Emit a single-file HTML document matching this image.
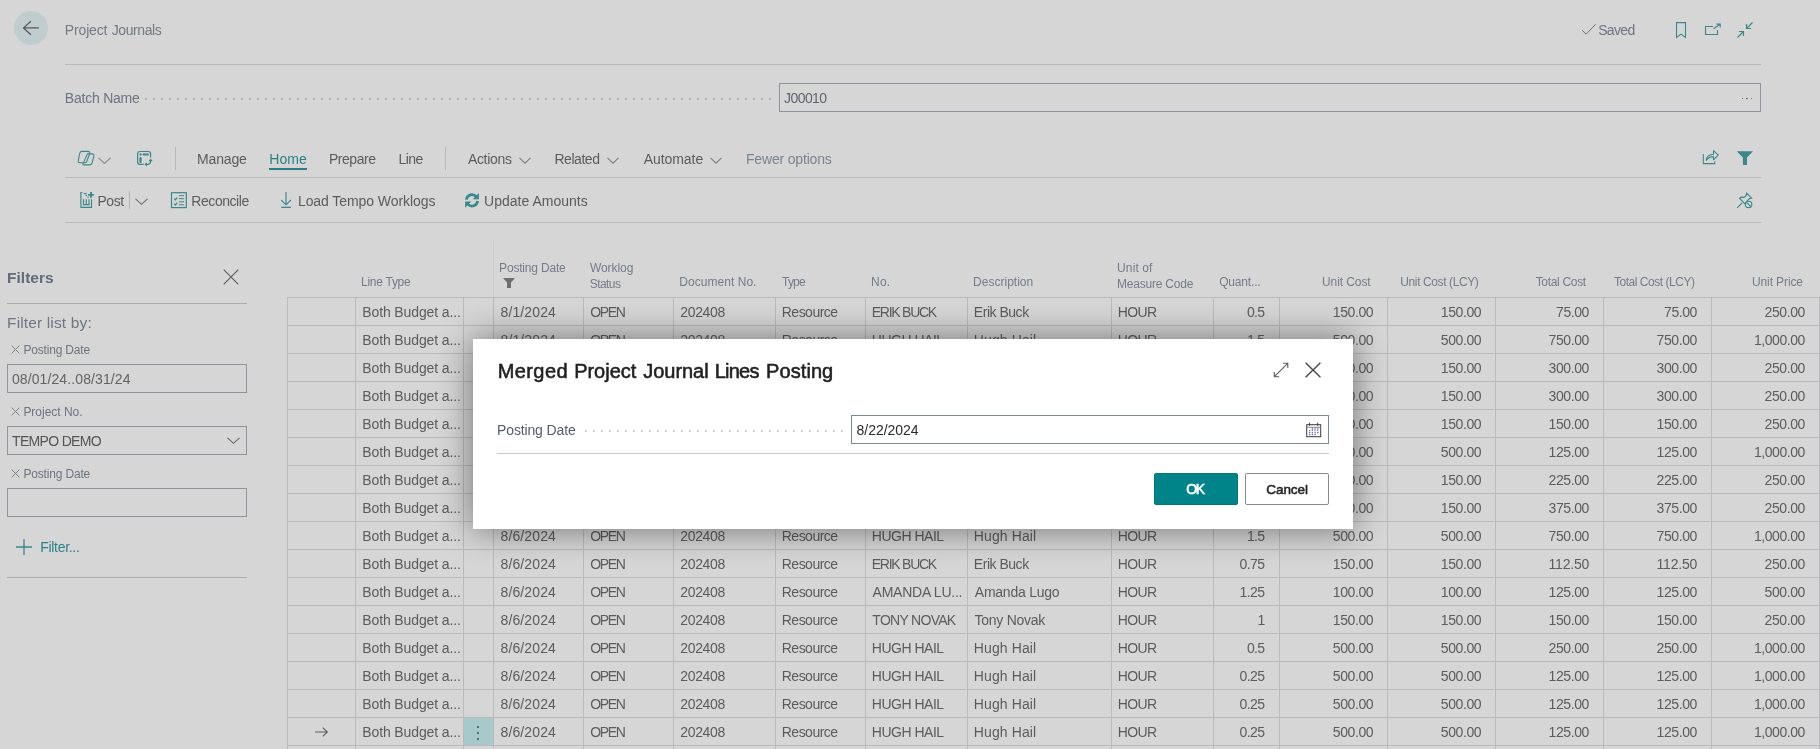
<!DOCTYPE html>
<html lang="en"><head><meta charset="utf-8"><title>Project Journals</title>
<style>
html,body{margin:0;padding:0;}
body{width:1820px;height:749px;overflow:hidden;position:relative;background:#d6d6d6;font-family:"Liberation Sans",sans-serif;}
.t{position:absolute;white-space:pre;}
#page,#dlg{position:absolute;left:0;top:0;width:1820px;height:749px;overflow:hidden;will-change:transform;}
.f0{font-size:14px;line-height:20px;color:#727a86;}
.f1{font-size:14px;line-height:20px;color:#6d7684;}
.f2{font-size:14px;line-height:20px;color:#6b7480;}
.f3{font-size:14px;line-height:20px;color:#5f6470;}
.f4{font-size:14px;line-height:20px;color:#5c5c5c;}
.f5{font-size:14px;line-height:20px;color:#2a8287;}
.f6{font-size:14px;line-height:20px;color:#7b8491;}
.f7{font-size:15.5px;line-height:21px;color:#626a78;font-weight:700;}
.f8{font-size:15.5px;line-height:21px;color:#6e7683;}
.f9{font-size:12px;line-height:18px;color:#6c7582;}
.f10{font-size:14px;line-height:20px;color:#636363;}
.f11{font-size:14px;line-height:20px;color:#555;}
.f12{font-size:12px;line-height:18px;color:#747c88;}
.f13{font-size:20px;line-height:26px;color:#212121;-webkit-text-stroke:0.55px #212121;}
.f14{font-size:14px;line-height:20px;color:#505c6d;}
.f15{font-size:14px;line-height:20px;color:#2a2a2a;}
.f16{font-size:14px;line-height:20px;color:#fff;-webkit-text-stroke:0.6px #fff;}
.f17{font-size:13.5px;line-height:19px;color:#252525;-webkit-text-stroke:0.55px #252525;}
</style></head><body>
<div id="page">
<header id="titlebar">
<div style="position:absolute;left:14px;top:11px;width:34px;height:34px;border-radius:50%;background:#bfcdce;"></div>
<svg style="position:absolute;left:22px;top:20px;overflow:visible;" width="18" height="16" viewBox="0 0 18 16" aria-hidden="true"><path d="M16.800 7.900H1.600M8.900 1.200L1.500 7.900L8.900 14.700" fill="none" stroke="#555" stroke-width="1.200"/></svg>
<svg style="position:absolute;left:1581px;top:23px;overflow:visible;" width="16" height="13" viewBox="0 0 16 13" aria-hidden="true"><path d="M1 7.200L5.200 11.200L14.600 1.300" fill="none" stroke="#727272" stroke-width="1"/></svg>
<svg style="position:absolute;left:1675px;top:21px;overflow:visible;" width="12" height="18" viewBox="0 0 12 18" aria-hidden="true"><path d="M1.500 1.600H10.500V16.500L6 13.100L1.500 16.500Z" fill="none" stroke="#3a888c" stroke-width="1.100"/></svg>
<svg style="position:absolute;left:1704px;top:22px;overflow:visible;" width="18" height="15" viewBox="0 0 18 15" aria-hidden="true"><path d="M9 4.500H1.500V12.500H13.500V8" fill="none" stroke="#3a888c" stroke-width="1.100"/><path d="M9.600 6.700L16 2.300M12.400 2.100H16.200V5.600" fill="none" stroke="#3a888c" stroke-width="1.100"/></svg>
<svg style="position:absolute;left:1736px;top:21px;overflow:visible;" width="18" height="18" viewBox="0 0 18 18" aria-hidden="true"><path d="M16.5 1.5l-6 6M10.5 3v4.5H15M1.5 16.5l6-6M3 10.5h4.5V15" fill="none" stroke="#3a888c" stroke-width="1.15"/></svg>
<div style="position:absolute;left:65px;top:64px;width:1696px;height:1px;background:#b9babd;"></div>
<span class="t f0" style="left:64.85px;top:20px;letter-spacing:-0.16px;">Project</span>
<span class="t f0" style="left:111.75px;top:20px;letter-spacing:-0.42px;">Journals</span>
<span class="t f1" style="left:1598.15px;top:20px;letter-spacing:-0.65px;">Saved</span>
</header>
<section id="batch">
<div style="position:absolute;left:145px;top:98px;width:626px;height:2px;background-image:linear-gradient(to right,#b3b4b9 2px,rgba(179,180,185,0) 2px);background-size:8px 2px;"></div>
<div style="position:absolute;left:779px;top:83px;width:980px;height:27px;border:1px solid #8f939e;"></div>
<div style="position:absolute;left:1741.6px;top:97.6px;width:1.8px;height:1.8px;background:#555;border-radius:50%;"></div>
<div style="position:absolute;left:1746.1499999999999px;top:97.6px;width:1.8px;height:1.8px;background:#555;border-radius:50%;"></div>
<div style="position:absolute;left:1750.6999999999998px;top:97.6px;width:1.8px;height:1.8px;background:#555;border-radius:50%;"></div>
<span class="t f2" style="left:64.85px;top:88px;letter-spacing:-0.23px;">Batch Name</span>
<span class="t f3" style="left:784.05px;top:88px;letter-spacing:-0.58px;">J00010</span>
</section>
<nav id="menubar">
<svg style="position:absolute;left:77px;top:150px;overflow:visible;" width="18" height="16" viewBox="0 0 18 16" aria-hidden="true"><g fill="none" stroke="#3a888c" stroke-width="1.1" stroke-linejoin="round"><path d="M4.600 1.400H10.800Q13.300 1.400 12.600 3.600L9.500 12Q9.200 12.700 8 12.700H3.200Q.8 12.700 1.300 10.300L2.700 3.500Q3.100 1.400 4.600 1.400Z"/><path d="M10.400 3.900H14.900Q17.500 3.900 16.800 6.400L15.100 12.800Q14.500 14.900 12.400 14.900H7.200Q5.600 14.900 6.100 13.600Z"/></g></svg>
<svg style="position:absolute;left:97.5px;top:156.5px;overflow:visible;" width="13" height="8" viewBox="0 0 13 8" aria-hidden="true"><path d="M.5 .8L6.500 6.300L12.500 .8" fill="none" stroke="#858585" stroke-width="1.150"/></svg>
<svg style="position:absolute;left:137px;top:150px;overflow:visible;" width="16" height="16" viewBox="0 0 16 16" aria-hidden="true"><g fill="none" stroke="#3a888c" stroke-width="1.2"><path d="M13.600 7.600V3.900Q13.600 1.500 11.200 1.500H3Q.6 1.500 .6 3.900V12Q.6 14.400 3 14.400H6.700"/><path d="M6.500 4.500H11" stroke-width="2" stroke-linecap="round"/><path d="M3.500 8V12" stroke-width="2.200" stroke-linecap="round"/><path d="M13.600 10V11.600Q13.600 14.400 10.800 14.400H8.600"/><path d="M12.200 11L13.600 9.500L15 11M9.800 13L8.300 14.400L9.800 15.800" stroke-width="1.1"/></g><circle cx="3.500" cy="4.500" r="1.150" fill="#3a888c"/></svg>
<div style="position:absolute;left:175px;top:147px;width:1px;height:23px;background:#b5b7bb;"></div>
<div style="position:absolute;left:269px;top:168px;width:38px;height:2px;background:#288085;"></div>
<div style="position:absolute;left:445px;top:147px;width:1px;height:23px;background:#b5b7bb;"></div>
<svg style="position:absolute;left:518.5px;top:156.5px;overflow:visible;" width="13" height="8" viewBox="0 0 13 8" aria-hidden="true"><path d="M.5 .8L6 6.200L11.500 .8" fill="none" stroke="#808080" stroke-width="1.150"/></svg>
<svg style="position:absolute;left:606.6px;top:156.5px;overflow:visible;" width="13" height="8" viewBox="0 0 13 8" aria-hidden="true"><path d="M.5 .8L6 6.200L11.500 .8" fill="none" stroke="#808080" stroke-width="1.150"/></svg>
<svg style="position:absolute;left:710.2px;top:156.5px;overflow:visible;" width="13" height="8" viewBox="0 0 13 8" aria-hidden="true"><path d="M.5 .8L6 6.200L11.500 .8" fill="none" stroke="#808080" stroke-width="1.150"/></svg>
<svg style="position:absolute;left:1702px;top:149px;overflow:visible;" width="18" height="16" viewBox="0 0 18 16" aria-hidden="true"><g fill="none" stroke="#3a888c" stroke-width="1.05"><path d="M1.300 5V14.600H12.800V12.300"/><path d="M4.200 11.400C4.600 7.600 7.200 5.400 11.500 5.200V1.700L16.300 6.200L11.500 10.800V7.600C8.300 7.600 6 8.700 4.200 11.400Z" stroke-linejoin="round"/></g></svg>
<svg style="position:absolute;left:1736px;top:151px;overflow:visible;" width="18" height="15" viewBox="0 0 18 15" aria-hidden="true"><path d="M.8 .2H17.100L11 6.400V14H6.900V6.400Z" fill="#3a888c"/></svg>
<div style="position:absolute;left:65px;top:177px;width:1696px;height:1px;background:#b9babd;"></div>
<span class="t f4" style="left:197.05px;top:149px;letter-spacing:-0.15px;">Manage</span>
<span class="t f5" style="left:269.35px;top:149px;">Home</span>
<span class="t f4" style="left:328.95px;top:149px;letter-spacing:-0.45px;">Prepare</span>
<span class="t f4" style="left:398.45px;top:149px;letter-spacing:-0.57px;">Line</span>
<span class="t f4" style="left:467.9px;top:149px;letter-spacing:-0.32px;">Actions</span>
<span class="t f4" style="left:554.45px;top:149px;letter-spacing:-0.46px;">Related</span>
<span class="t f4" style="left:643.7px;top:149px;letter-spacing:-0.06px;">Automate</span>
<span class="t f6" style="left:745.95px;top:149px;letter-spacing:-0.17px;">Fewer options</span>
</nav>
<div id="actionbar" role="toolbar">
<svg style="position:absolute;left:79px;top:191px;overflow:visible;" width="16" height="18" viewBox="0 0 16 18" aria-hidden="true"><g fill="none" stroke="#3a888c" stroke-width="1.150"><path d="M3.400 1.500H1.900V16.400H12.500V8.200"/><path d="M4.600 2.500H7.600M6.500 4.400H8.100M8.300 6.200H9.900" stroke-width="1.100"/><path d="M4.500 8.200V13.600H10V8.200M7.300 8.200V13.600"/><path d="M12 1V6.800M9.100 3.900H14.900" stroke-width="1.900"/></g></svg>
<div style="position:absolute;left:129px;top:191px;width:1px;height:18px;background:#b0b3b8;"></div>
<svg style="position:absolute;left:134.8px;top:198px;overflow:visible;" width="13" height="8" viewBox="0 0 13 8" aria-hidden="true"><path d="M.5 .8L6.500 6.300L12.500 .8" fill="none" stroke="#6e6e6e" stroke-width="1.150"/></svg>
<svg style="position:absolute;left:170px;top:192px;overflow:visible;" width="18" height="17" viewBox="0 0 18 17" aria-hidden="true"><g fill="none" stroke="#3a888c" stroke-width="1.2"><rect x="1.500" y=".7" width="14.800" height="14.900"/><path d="M8.900 3.700H14M8.900 6.700H14M8.900 9.800H14M8.900 12.800H14" stroke-width="1"/><path d="M4.200 6.600l1.100 1.100 2-2.100M4.200 11.800l1.100 1.100 2-2.100" stroke-width="1.300"/></g></svg>
<svg style="position:absolute;left:280px;top:192px;overflow:visible;" width="12" height="17" viewBox="0 0 12 17" aria-hidden="true"><path d="M6 0V12.600M1.200 8L6 12.800L10.900 8M1.200 15.400H10.900" fill="none" stroke="#3a888c" stroke-width="1.15"/></svg>
<svg style="position:absolute;left:464px;top:192px;overflow:visible;" width="16" height="16" viewBox="0 0 16 16" aria-hidden="true"><g fill="none" stroke="#3a888c" stroke-width="2.700"><path d="M2.400 7.700A5.600 5.600 0 0 1 12.300 4.700"/><path d="M13.600 9A5.600 5.600 0 0 1 3.700 12"/></g><path d="M14.900 .9V7.300H8.700Z" fill="#3a888c"/><path d="M1.100 15.800V9.400H7.300Z" fill="#3a888c"/></svg>
<svg style="position:absolute;left:1736px;top:192px;overflow:visible;" width="18" height="18" viewBox="0 0 18 18" aria-hidden="true"><g fill="none" stroke="#3a888c" stroke-width="1.1"><path d="M1.200 15.800l5-5M10.600 1.200l5 5-2.200.4-2 2 .3 3.300-1.400 1.300L3.600 6.500l1.300-1.400 3.300.3 2-2z"/><circle cx="12.600" cy="12.400" r="3.200" fill="#d6d6d6"/><path d="M10.400 10.200l4.400 4.400"/></g></svg>
<div style="position:absolute;left:65px;top:222px;width:1696px;height:1px;background:#b9babd;"></div>
<span class="t f4" style="left:97.45px;top:191px;letter-spacing:-0.45px;">Post</span>
<span class="t f4" style="left:191.35px;top:191px;letter-spacing:-0.45px;">Reconcile</span>
<span class="t f4" style="left:297.95px;top:191px;letter-spacing:-0.07px;">Load Tempo Worklogs</span>
<span class="t f4" style="left:484px;top:191px;letter-spacing:0.02px;">Update Amounts</span>
</div>
<aside id="filterpane">
<svg style="position:absolute;left:223px;top:269px;overflow:visible;" width="16" height="16" viewBox="0 0 16 16" aria-hidden="true"><path d="M.7.700l14.600 14.600M15.300.700L.7 15.300" fill="none" stroke="#5e5e5e" stroke-width="1.15"/></svg>
<div style="position:absolute;left:7px;top:303px;width:240px;height:1px;background:#a9acb2;"></div>
<svg style="position:absolute;left:10.5px;top:345px;overflow:visible;" width="9" height="9" viewBox="0 0 9 9" aria-hidden="true"><path d="M.6.600l7.800 7.800M8.400.600L.6 8.400" fill="none" stroke="#7c818c" stroke-width="1"/></svg>
<div style="position:absolute;left:7px;top:364px;width:238px;height:27px;border:1px solid #8f939e;"></div>
<svg style="position:absolute;left:10.5px;top:407px;overflow:visible;" width="9" height="9" viewBox="0 0 9 9" aria-hidden="true"><path d="M.6.600l7.800 7.800M8.400.600L.6 8.400" fill="none" stroke="#7c818c" stroke-width="1"/></svg>
<div style="position:absolute;left:7px;top:426px;width:238px;height:27px;border:1px solid #8f939e;"></div>
<svg style="position:absolute;left:227px;top:437px;overflow:visible;" width="13" height="8" viewBox="0 0 13 8" aria-hidden="true"><path d="M.5 .8L6.500 6.300L12.500 .8" fill="none" stroke="#666" stroke-width="1.150"/></svg>
<svg style="position:absolute;left:10.5px;top:469px;overflow:visible;" width="9" height="9" viewBox="0 0 9 9" aria-hidden="true"><path d="M.6.600l7.800 7.800M8.400.600L.6 8.400" fill="none" stroke="#7c818c" stroke-width="1"/></svg>
<div style="position:absolute;left:7px;top:488px;width:238px;height:27px;border:1px solid #8f939e;"></div>
<svg style="position:absolute;left:16px;top:539px;overflow:visible;" width="16" height="16" viewBox="0 0 16 16" aria-hidden="true"><path d="M8 0v16M0 8h16" fill="none" stroke="#3a888c" stroke-width="1.3"/></svg>
<div style="position:absolute;left:7px;top:577px;width:240px;height:1px;background:#a9acb2;"></div>
<span class="t f7" style="left:7px;top:267px;letter-spacing:0.02px;">Filters</span>
<span class="t f8" style="left:7.05px;top:312px;letter-spacing:0.14px;">Filter list by:</span>
<span class="t f9" style="left:23.4px;top:341px;letter-spacing:-0.18px;">Posting Date</span>
<span class="t f10" style="left:11.9px;top:369px;letter-spacing:0.11px;">08/01/24..08/31/24</span>
<span class="t f9" style="left:23.4px;top:403px;letter-spacing:-0.02px;">Project No.</span>
<span class="t f11" style="left:12.05px;top:431px;letter-spacing:-0.68px;">TEMPO DEMO</span>
<span class="t f9" style="left:23.4px;top:465px;letter-spacing:-0.17px;">Posting Date</span>
<span class="t f5" style="left:40.15px;top:537px;letter-spacing:-0.29px;">Filter...</span>
</aside>
<div id="grid" role="table">
<div style="position:absolute;left:493px;top:241px;width:1px;height:56px;background:#cacacc;"></div>
<svg style="position:absolute;left:503px;top:278px;overflow:visible;" width="12" height="11" viewBox="0 0 12 11" aria-hidden="true"><path d="M0 0H12L8 4.500V10H4V4.500Z" fill="#6e6e6e"/></svg>
<div style="position:absolute;left:287px;top:297px;width:1533px;height:1px;background:#b9babd;"></div>
<div style="position:absolute;left:287px;top:325px;width:1533px;height:1px;background:#b9babd;"></div>
<div style="position:absolute;left:287px;top:353px;width:1533px;height:1px;background:#b9babd;"></div>
<div style="position:absolute;left:287px;top:381px;width:1533px;height:1px;background:#b9babd;"></div>
<div style="position:absolute;left:287px;top:409px;width:1533px;height:1px;background:#b9babd;"></div>
<div style="position:absolute;left:287px;top:437px;width:1533px;height:1px;background:#b9babd;"></div>
<div style="position:absolute;left:287px;top:465px;width:1533px;height:1px;background:#b9babd;"></div>
<div style="position:absolute;left:287px;top:493px;width:1533px;height:1px;background:#b9babd;"></div>
<div style="position:absolute;left:287px;top:521px;width:1533px;height:1px;background:#b9babd;"></div>
<div style="position:absolute;left:287px;top:549px;width:1533px;height:1px;background:#b9babd;"></div>
<div style="position:absolute;left:287px;top:577px;width:1533px;height:1px;background:#b9babd;"></div>
<div style="position:absolute;left:287px;top:605px;width:1533px;height:1px;background:#b9babd;"></div>
<div style="position:absolute;left:287px;top:633px;width:1533px;height:1px;background:#b9babd;"></div>
<div style="position:absolute;left:287px;top:661px;width:1533px;height:1px;background:#b9babd;"></div>
<div style="position:absolute;left:287px;top:689px;width:1533px;height:1px;background:#b9babd;"></div>
<div style="position:absolute;left:287px;top:717px;width:1533px;height:1px;background:#b9babd;"></div>
<div style="position:absolute;left:287px;top:745px;width:1533px;height:1px;background:#b9babd;"></div>
<div style="position:absolute;left:287px;top:297px;width:1px;height:452px;background:#b9babd;"></div>
<div style="position:absolute;left:355px;top:297px;width:1px;height:452px;background:#b9babd;"></div>
<div style="position:absolute;left:463px;top:297px;width:1px;height:452px;background:#b9babd;"></div>
<div style="position:absolute;left:493px;top:297px;width:1px;height:452px;background:#b9babd;"></div>
<div style="position:absolute;left:583px;top:297px;width:1px;height:452px;background:#b9babd;"></div>
<div style="position:absolute;left:673px;top:297px;width:1px;height:452px;background:#b9babd;"></div>
<div style="position:absolute;left:775px;top:297px;width:1px;height:452px;background:#b9babd;"></div>
<div style="position:absolute;left:865px;top:297px;width:1px;height:452px;background:#b9babd;"></div>
<div style="position:absolute;left:967px;top:297px;width:1px;height:452px;background:#b9babd;"></div>
<div style="position:absolute;left:1111px;top:297px;width:1px;height:452px;background:#b9babd;"></div>
<div style="position:absolute;left:1213px;top:297px;width:1px;height:452px;background:#b9babd;"></div>
<div style="position:absolute;left:1279px;top:297px;width:1px;height:452px;background:#b9babd;"></div>
<div style="position:absolute;left:1387px;top:297px;width:1px;height:452px;background:#b9babd;"></div>
<div style="position:absolute;left:1495px;top:297px;width:1px;height:452px;background:#b9babd;"></div>
<div style="position:absolute;left:1603px;top:297px;width:1px;height:452px;background:#b9babd;"></div>
<div style="position:absolute;left:1711px;top:297px;width:1px;height:452px;background:#b9babd;"></div>
<div style="position:absolute;left:1819px;top:297px;width:1px;height:452px;background:#b9babd;"></div>
<div style="position:absolute;left:464px;top:718px;width:29px;height:27px;background:#a6c9cc;"></div>
<div style="position:absolute;left:477.4px;top:725.7px;width:2px;height:2px;background:#4c4c4c;border-radius:50%;"></div>
<div style="position:absolute;left:477.4px;top:731.6px;width:2px;height:2px;background:#4c4c4c;border-radius:50%;"></div>
<div style="position:absolute;left:477.4px;top:737.6px;width:2px;height:2px;background:#4c4c4c;border-radius:50%;"></div>
<svg style="position:absolute;left:315px;top:727px;overflow:visible;" width="13" height="10" viewBox="0 0 13 10" aria-hidden="true"><path d="M0 5h12.300M7.800.600L12.300 5 7.800 9.400" fill="none" stroke="#5c5c5c" stroke-width="1.1"/></svg>
<span class="t f12" style="left:361.1px;top:273px;letter-spacing:-0.28px;">Line Type</span>
<span class="t f12" style="left:499.1px;top:259px;letter-spacing:-0.19px;">Posting Date</span>
<span class="t f12" style="left:590px;top:259px;letter-spacing:-0.08px;">Worklog</span>
<span class="t f12" style="left:589.7px;top:275px;letter-spacing:-0.54px;">Status</span>
<span class="t f12" style="left:679.2px;top:273px;letter-spacing:0.05px;">Document No.</span>
<span class="t f12" style="left:782.05px;top:273px;letter-spacing:-0.82px;">Type</span>
<span class="t f12" style="left:871px;top:273px;letter-spacing:0.25px;">No.</span>
<span class="t f12" style="left:973.1px;top:273px;letter-spacing:0.01px;">Description</span>
<span class="t f12" style="left:1117.1px;top:259px;letter-spacing:0.11px;">Unit of</span>
<span class="t f12" style="left:1117.1px;top:275px;letter-spacing:-0.22px;">Measure Code</span>
<span class="t f12" style="left:1219.2px;top:273px;letter-spacing:-0.18px;">Quant...</span>
<span class="t f12" style="left:1322px;top:273px;letter-spacing:-0.09px;">Unit Cost</span>
<span class="t f12" style="left:1400.3px;top:273px;letter-spacing:-0.39px;">Unit Cost (LCY)</span>
<span class="t f12" style="left:1535.65px;top:273px;letter-spacing:-0.31px;">Total Cost</span>
<span class="t f12" style="left:1613.95px;top:273px;letter-spacing:-0.47px;">Total Cost (LCY)</span>
<span class="t f12" style="left:1752px;top:273px;letter-spacing:-0.11px;">Unit Price</span>
<div id="row1" role="row">
<span class="t f4" style="left:362.25px;top:302px;letter-spacing:-0.12px;">Both Budget a...</span>
<span class="t f4" style="left:500.5px;top:302px;letter-spacing:0.13px;">8/1/2024</span>
<span class="t f4" style="left:590.25px;top:302px;letter-spacing:-1.35px;">OPEN</span>
<span class="t f4" style="left:680.25px;top:302px;letter-spacing:-0.33px;">202408</span>
<span class="t f4" style="left:781.75px;top:302px;letter-spacing:-0.51px;">Resource</span>
<span class="t f4" style="left:871.75px;top:302px;letter-spacing:-1.25px;">ERIK BUCK</span>
<span class="t f4" style="left:973.85px;top:302px;letter-spacing:-0.48px;">Erik Buck</span>
<span class="t f4" style="left:1117.65px;top:302px;letter-spacing:-0.62px;">HOUR</span>
<span class="t f4" style="left:1246.94px;top:302px;letter-spacing:-0.67px;">0.5</span>
<span class="t f4" style="left:1332.81px;top:302px;letter-spacing:-0.41px;">150.00</span>
<span class="t f4" style="left:1440.81px;top:302px;letter-spacing:-0.41px;">150.00</span>
<span class="t f4" style="left:1556.12px;top:302px;letter-spacing:-0.46px;">75.00</span>
<span class="t f4" style="left:1664.12px;top:302px;letter-spacing:-0.46px;">75.00</span>
<span class="t f4" style="left:1764.61px;top:302px;letter-spacing:-0.41px;">250.00</span>
</div>
<div id="row2" role="row">
<span class="t f4" style="left:362.25px;top:330px;letter-spacing:-0.12px;">Both Budget a...</span>
<span class="t f4" style="left:500.5px;top:330px;letter-spacing:0.13px;">8/1/2024</span>
<span class="t f4" style="left:590.25px;top:330px;letter-spacing:-1.35px;">OPEN</span>
<span class="t f4" style="left:680.25px;top:330px;letter-spacing:-0.33px;">202408</span>
<span class="t f4" style="left:781.75px;top:330px;letter-spacing:-0.51px;">Resource</span>
<span class="t f4" style="left:871.75px;top:330px;letter-spacing:-0.48px;">HUGH HAIL</span>
<span class="t f4" style="left:973.85px;top:330px;letter-spacing:0.11px;">Hugh Hail</span>
<span class="t f4" style="left:1117.65px;top:330px;letter-spacing:-0.62px;">HOUR</span>
<span class="t f4" style="left:1246.94px;top:330px;letter-spacing:-0.67px;">1.5</span>
<span class="t f4" style="left:1332.81px;top:330px;letter-spacing:-0.41px;">500.00</span>
<span class="t f4" style="left:1440.81px;top:330px;letter-spacing:-0.41px;">500.00</span>
<span class="t f4" style="left:1548.61px;top:330px;letter-spacing:-0.41px;">750.00</span>
<span class="t f4" style="left:1656.61px;top:330px;letter-spacing:-0.41px;">750.00</span>
<span class="t f4" style="left:1753.95px;top:330px;letter-spacing:-0.45px;">1,000.00</span>
</div>
<div id="row3" role="row">
<span class="t f4" style="left:362.25px;top:358px;letter-spacing:-0.12px;">Both Budget a...</span>
<span class="t f4" style="left:500.5px;top:358px;letter-spacing:0.13px;">8/1/2024</span>
<span class="t f4" style="left:590.25px;top:358px;letter-spacing:-1.35px;">OPEN</span>
<span class="t f4" style="left:680.25px;top:358px;letter-spacing:-0.33px;">202408</span>
<span class="t f4" style="left:781.75px;top:358px;letter-spacing:-0.51px;">Resource</span>
<span class="t f4" style="left:871.75px;top:358px;letter-spacing:-1.25px;">ERIK BUCK</span>
<span class="t f4" style="left:973.85px;top:358px;letter-spacing:-0.48px;">Erik Buck</span>
<span class="t f4" style="left:1117.65px;top:358px;letter-spacing:-0.62px;">HOUR</span>
<span class="t f4" style="left:1257.6px;top:358px;">2</span>
<span class="t f4" style="left:1332.81px;top:358px;letter-spacing:-0.41px;">150.00</span>
<span class="t f4" style="left:1440.81px;top:358px;letter-spacing:-0.41px;">150.00</span>
<span class="t f4" style="left:1548.61px;top:358px;letter-spacing:-0.41px;">300.00</span>
<span class="t f4" style="left:1656.61px;top:358px;letter-spacing:-0.41px;">300.00</span>
<span class="t f4" style="left:1764.61px;top:358px;letter-spacing:-0.41px;">250.00</span>
</div>
<div id="row4" role="row">
<span class="t f4" style="left:362.25px;top:386px;letter-spacing:-0.12px;">Both Budget a...</span>
<span class="t f4" style="left:500.5px;top:386px;letter-spacing:0.13px;">8/1/2024</span>
<span class="t f4" style="left:590.25px;top:386px;letter-spacing:-1.35px;">OPEN</span>
<span class="t f4" style="left:680.25px;top:386px;letter-spacing:-0.33px;">202408</span>
<span class="t f4" style="left:781.75px;top:386px;letter-spacing:-0.51px;">Resource</span>
<span class="t f4" style="left:871.75px;top:386px;letter-spacing:-1.25px;">ERIK BUCK</span>
<span class="t f4" style="left:973.85px;top:386px;letter-spacing:-0.48px;">Erik Buck</span>
<span class="t f4" style="left:1117.65px;top:386px;letter-spacing:-0.62px;">HOUR</span>
<span class="t f4" style="left:1257.6px;top:386px;">2</span>
<span class="t f4" style="left:1332.81px;top:386px;letter-spacing:-0.41px;">150.00</span>
<span class="t f4" style="left:1440.81px;top:386px;letter-spacing:-0.41px;">150.00</span>
<span class="t f4" style="left:1548.61px;top:386px;letter-spacing:-0.41px;">300.00</span>
<span class="t f4" style="left:1656.61px;top:386px;letter-spacing:-0.41px;">300.00</span>
<span class="t f4" style="left:1764.61px;top:386px;letter-spacing:-0.41px;">250.00</span>
</div>
<div id="row5" role="row">
<span class="t f4" style="left:362.25px;top:414px;letter-spacing:-0.12px;">Both Budget a...</span>
<span class="t f4" style="left:500.5px;top:414px;letter-spacing:0.13px;">8/2/2024</span>
<span class="t f4" style="left:590.25px;top:414px;letter-spacing:-1.35px;">OPEN</span>
<span class="t f4" style="left:680.25px;top:414px;letter-spacing:-0.33px;">202408</span>
<span class="t f4" style="left:781.75px;top:414px;letter-spacing:-0.51px;">Resource</span>
<span class="t f4" style="left:871.75px;top:414px;letter-spacing:-1.25px;">ERIK BUCK</span>
<span class="t f4" style="left:973.85px;top:414px;letter-spacing:-0.48px;">Erik Buck</span>
<span class="t f4" style="left:1117.65px;top:414px;letter-spacing:-0.62px;">HOUR</span>
<span class="t f4" style="left:1257.6px;top:414px;">1</span>
<span class="t f4" style="left:1332.81px;top:414px;letter-spacing:-0.41px;">150.00</span>
<span class="t f4" style="left:1440.81px;top:414px;letter-spacing:-0.41px;">150.00</span>
<span class="t f4" style="left:1548.61px;top:414px;letter-spacing:-0.41px;">150.00</span>
<span class="t f4" style="left:1656.61px;top:414px;letter-spacing:-0.41px;">150.00</span>
<span class="t f4" style="left:1764.61px;top:414px;letter-spacing:-0.41px;">250.00</span>
</div>
<div id="row6" role="row">
<span class="t f4" style="left:362.25px;top:442px;letter-spacing:-0.12px;">Both Budget a...</span>
<span class="t f4" style="left:500.5px;top:442px;letter-spacing:0.13px;">8/2/2024</span>
<span class="t f4" style="left:590.25px;top:442px;letter-spacing:-1.35px;">OPEN</span>
<span class="t f4" style="left:680.25px;top:442px;letter-spacing:-0.33px;">202408</span>
<span class="t f4" style="left:781.75px;top:442px;letter-spacing:-0.51px;">Resource</span>
<span class="t f4" style="left:871.75px;top:442px;letter-spacing:-0.48px;">HUGH HAIL</span>
<span class="t f4" style="left:973.85px;top:442px;letter-spacing:0.11px;">Hugh Hail</span>
<span class="t f4" style="left:1117.65px;top:442px;letter-spacing:-0.62px;">HOUR</span>
<span class="t f4" style="left:1239.42px;top:442px;letter-spacing:-0.52px;">0.25</span>
<span class="t f4" style="left:1332.81px;top:442px;letter-spacing:-0.41px;">500.00</span>
<span class="t f4" style="left:1440.81px;top:442px;letter-spacing:-0.41px;">500.00</span>
<span class="t f4" style="left:1548.61px;top:442px;letter-spacing:-0.41px;">125.00</span>
<span class="t f4" style="left:1656.61px;top:442px;letter-spacing:-0.41px;">125.00</span>
<span class="t f4" style="left:1753.95px;top:442px;letter-spacing:-0.45px;">1,000.00</span>
</div>
<div id="row7" role="row">
<span class="t f4" style="left:362.25px;top:470px;letter-spacing:-0.12px;">Both Budget a...</span>
<span class="t f4" style="left:500.5px;top:470px;letter-spacing:0.13px;">8/2/2024</span>
<span class="t f4" style="left:590.25px;top:470px;letter-spacing:-1.35px;">OPEN</span>
<span class="t f4" style="left:680.25px;top:470px;letter-spacing:-0.33px;">202408</span>
<span class="t f4" style="left:781.75px;top:470px;letter-spacing:-0.51px;">Resource</span>
<span class="t f4" style="left:871.75px;top:470px;letter-spacing:-1.25px;">ERIK BUCK</span>
<span class="t f4" style="left:973.85px;top:470px;letter-spacing:-0.48px;">Erik Buck</span>
<span class="t f4" style="left:1117.65px;top:470px;letter-spacing:-0.62px;">HOUR</span>
<span class="t f4" style="left:1246.94px;top:470px;letter-spacing:-0.67px;">1.5</span>
<span class="t f4" style="left:1332.81px;top:470px;letter-spacing:-0.41px;">150.00</span>
<span class="t f4" style="left:1440.81px;top:470px;letter-spacing:-0.41px;">150.00</span>
<span class="t f4" style="left:1548.61px;top:470px;letter-spacing:-0.41px;">225.00</span>
<span class="t f4" style="left:1656.61px;top:470px;letter-spacing:-0.41px;">225.00</span>
<span class="t f4" style="left:1764.61px;top:470px;letter-spacing:-0.41px;">250.00</span>
</div>
<div id="row8" role="row">
<span class="t f4" style="left:362.25px;top:498px;letter-spacing:-0.12px;">Both Budget a...</span>
<span class="t f4" style="left:500.5px;top:498px;letter-spacing:0.13px;">8/5/2024</span>
<span class="t f4" style="left:590.25px;top:498px;letter-spacing:-1.35px;">OPEN</span>
<span class="t f4" style="left:680.25px;top:498px;letter-spacing:-0.33px;">202408</span>
<span class="t f4" style="left:781.75px;top:498px;letter-spacing:-0.51px;">Resource</span>
<span class="t f4" style="left:871.75px;top:498px;letter-spacing:-1.25px;">ERIK BUCK</span>
<span class="t f4" style="left:973.85px;top:498px;letter-spacing:-0.48px;">Erik Buck</span>
<span class="t f4" style="left:1117.65px;top:498px;letter-spacing:-0.62px;">HOUR</span>
<span class="t f4" style="left:1246.94px;top:498px;letter-spacing:-0.67px;">2.5</span>
<span class="t f4" style="left:1332.81px;top:498px;letter-spacing:-0.41px;">150.00</span>
<span class="t f4" style="left:1440.81px;top:498px;letter-spacing:-0.41px;">150.00</span>
<span class="t f4" style="left:1548.61px;top:498px;letter-spacing:-0.41px;">375.00</span>
<span class="t f4" style="left:1656.61px;top:498px;letter-spacing:-0.41px;">375.00</span>
<span class="t f4" style="left:1764.61px;top:498px;letter-spacing:-0.41px;">250.00</span>
</div>
<div id="row9" role="row">
<span class="t f4" style="left:362.25px;top:526px;letter-spacing:-0.12px;">Both Budget a...</span>
<span class="t f4" style="left:500.5px;top:526px;letter-spacing:0.13px;">8/6/2024</span>
<span class="t f4" style="left:590.25px;top:526px;letter-spacing:-1.35px;">OPEN</span>
<span class="t f4" style="left:680.25px;top:526px;letter-spacing:-0.33px;">202408</span>
<span class="t f4" style="left:781.75px;top:526px;letter-spacing:-0.51px;">Resource</span>
<span class="t f4" style="left:871.75px;top:526px;letter-spacing:-0.48px;">HUGH HAIL</span>
<span class="t f4" style="left:973.85px;top:526px;letter-spacing:0.11px;">Hugh Hail</span>
<span class="t f4" style="left:1117.65px;top:526px;letter-spacing:-0.62px;">HOUR</span>
<span class="t f4" style="left:1246.94px;top:526px;letter-spacing:-0.67px;">1.5</span>
<span class="t f4" style="left:1332.81px;top:526px;letter-spacing:-0.41px;">500.00</span>
<span class="t f4" style="left:1440.81px;top:526px;letter-spacing:-0.41px;">500.00</span>
<span class="t f4" style="left:1548.61px;top:526px;letter-spacing:-0.41px;">750.00</span>
<span class="t f4" style="left:1656.61px;top:526px;letter-spacing:-0.41px;">750.00</span>
<span class="t f4" style="left:1753.95px;top:526px;letter-spacing:-0.45px;">1,000.00</span>
</div>
<div id="row10" role="row">
<span class="t f4" style="left:362.25px;top:554px;letter-spacing:-0.12px;">Both Budget a...</span>
<span class="t f4" style="left:500.5px;top:554px;letter-spacing:0.13px;">8/6/2024</span>
<span class="t f4" style="left:590.25px;top:554px;letter-spacing:-1.35px;">OPEN</span>
<span class="t f4" style="left:680.25px;top:554px;letter-spacing:-0.33px;">202408</span>
<span class="t f4" style="left:781.75px;top:554px;letter-spacing:-0.51px;">Resource</span>
<span class="t f4" style="left:871.75px;top:554px;letter-spacing:-1.25px;">ERIK BUCK</span>
<span class="t f4" style="left:973.85px;top:554px;letter-spacing:-0.48px;">Erik Buck</span>
<span class="t f4" style="left:1117.65px;top:554px;letter-spacing:-0.62px;">HOUR</span>
<span class="t f4" style="left:1239.42px;top:554px;letter-spacing:-0.52px;">0.75</span>
<span class="t f4" style="left:1332.81px;top:554px;letter-spacing:-0.41px;">150.00</span>
<span class="t f4" style="left:1440.81px;top:554px;letter-spacing:-0.41px;">150.00</span>
<span class="t f4" style="left:1548.56px;top:554px;letter-spacing:-0.2px;">112.50</span>
<span class="t f4" style="left:1656.56px;top:554px;letter-spacing:-0.2px;">112.50</span>
<span class="t f4" style="left:1764.61px;top:554px;letter-spacing:-0.41px;">250.00</span>
</div>
<div id="row11" role="row">
<span class="t f4" style="left:362.25px;top:582px;letter-spacing:-0.12px;">Both Budget a...</span>
<span class="t f4" style="left:500.5px;top:582px;letter-spacing:0.13px;">8/6/2024</span>
<span class="t f4" style="left:590.25px;top:582px;letter-spacing:-1.35px;">OPEN</span>
<span class="t f4" style="left:680.25px;top:582px;letter-spacing:-0.33px;">202408</span>
<span class="t f4" style="left:781.75px;top:582px;letter-spacing:-0.51px;">Resource</span>
<span class="t f4" style="left:872.6px;top:582px;letter-spacing:-0.25px;">AMANDA LU...</span>
<span class="t f4" style="left:974.8px;top:582px;letter-spacing:-0.24px;">Amanda Lugo</span>
<span class="t f4" style="left:1117.65px;top:582px;letter-spacing:-0.62px;">HOUR</span>
<span class="t f4" style="left:1239.42px;top:582px;letter-spacing:-0.52px;">1.25</span>
<span class="t f4" style="left:1332.81px;top:582px;letter-spacing:-0.41px;">100.00</span>
<span class="t f4" style="left:1440.81px;top:582px;letter-spacing:-0.41px;">100.00</span>
<span class="t f4" style="left:1548.61px;top:582px;letter-spacing:-0.41px;">125.00</span>
<span class="t f4" style="left:1656.61px;top:582px;letter-spacing:-0.41px;">125.00</span>
<span class="t f4" style="left:1764.61px;top:582px;letter-spacing:-0.41px;">500.00</span>
</div>
<div id="row12" role="row">
<span class="t f4" style="left:362.25px;top:610px;letter-spacing:-0.12px;">Both Budget a...</span>
<span class="t f4" style="left:500.5px;top:610px;letter-spacing:0.13px;">8/6/2024</span>
<span class="t f4" style="left:590.25px;top:610px;letter-spacing:-1.35px;">OPEN</span>
<span class="t f4" style="left:680.25px;top:610px;letter-spacing:-0.33px;">202408</span>
<span class="t f4" style="left:781.75px;top:610px;letter-spacing:-0.51px;">Resource</span>
<span class="t f4" style="left:872.35px;top:610px;letter-spacing:-0.71px;">TONY NOVAK</span>
<span class="t f4" style="left:974.55px;top:610px;letter-spacing:-0.27px;">Tony Novak</span>
<span class="t f4" style="left:1117.65px;top:610px;letter-spacing:-0.62px;">HOUR</span>
<span class="t f4" style="left:1257.6px;top:610px;">1</span>
<span class="t f4" style="left:1332.81px;top:610px;letter-spacing:-0.41px;">150.00</span>
<span class="t f4" style="left:1440.81px;top:610px;letter-spacing:-0.41px;">150.00</span>
<span class="t f4" style="left:1548.61px;top:610px;letter-spacing:-0.41px;">150.00</span>
<span class="t f4" style="left:1656.61px;top:610px;letter-spacing:-0.41px;">150.00</span>
<span class="t f4" style="left:1764.61px;top:610px;letter-spacing:-0.41px;">250.00</span>
</div>
<div id="row13" role="row">
<span class="t f4" style="left:362.25px;top:638px;letter-spacing:-0.12px;">Both Budget a...</span>
<span class="t f4" style="left:500.5px;top:638px;letter-spacing:0.13px;">8/6/2024</span>
<span class="t f4" style="left:590.25px;top:638px;letter-spacing:-1.35px;">OPEN</span>
<span class="t f4" style="left:680.25px;top:638px;letter-spacing:-0.33px;">202408</span>
<span class="t f4" style="left:781.75px;top:638px;letter-spacing:-0.51px;">Resource</span>
<span class="t f4" style="left:871.75px;top:638px;letter-spacing:-0.48px;">HUGH HAIL</span>
<span class="t f4" style="left:973.85px;top:638px;letter-spacing:0.11px;">Hugh Hail</span>
<span class="t f4" style="left:1117.65px;top:638px;letter-spacing:-0.62px;">HOUR</span>
<span class="t f4" style="left:1246.94px;top:638px;letter-spacing:-0.67px;">0.5</span>
<span class="t f4" style="left:1332.81px;top:638px;letter-spacing:-0.41px;">500.00</span>
<span class="t f4" style="left:1440.81px;top:638px;letter-spacing:-0.41px;">500.00</span>
<span class="t f4" style="left:1548.61px;top:638px;letter-spacing:-0.41px;">250.00</span>
<span class="t f4" style="left:1656.61px;top:638px;letter-spacing:-0.41px;">250.00</span>
<span class="t f4" style="left:1753.95px;top:638px;letter-spacing:-0.45px;">1,000.00</span>
</div>
<div id="row14" role="row">
<span class="t f4" style="left:362.25px;top:666px;letter-spacing:-0.12px;">Both Budget a...</span>
<span class="t f4" style="left:500.5px;top:666px;letter-spacing:0.13px;">8/6/2024</span>
<span class="t f4" style="left:590.25px;top:666px;letter-spacing:-1.35px;">OPEN</span>
<span class="t f4" style="left:680.25px;top:666px;letter-spacing:-0.33px;">202408</span>
<span class="t f4" style="left:781.75px;top:666px;letter-spacing:-0.51px;">Resource</span>
<span class="t f4" style="left:871.75px;top:666px;letter-spacing:-0.48px;">HUGH HAIL</span>
<span class="t f4" style="left:973.85px;top:666px;letter-spacing:0.11px;">Hugh Hail</span>
<span class="t f4" style="left:1117.65px;top:666px;letter-spacing:-0.62px;">HOUR</span>
<span class="t f4" style="left:1239.42px;top:666px;letter-spacing:-0.52px;">0.25</span>
<span class="t f4" style="left:1332.81px;top:666px;letter-spacing:-0.41px;">500.00</span>
<span class="t f4" style="left:1440.81px;top:666px;letter-spacing:-0.41px;">500.00</span>
<span class="t f4" style="left:1548.61px;top:666px;letter-spacing:-0.41px;">125.00</span>
<span class="t f4" style="left:1656.61px;top:666px;letter-spacing:-0.41px;">125.00</span>
<span class="t f4" style="left:1753.95px;top:666px;letter-spacing:-0.45px;">1,000.00</span>
</div>
<div id="row15" role="row">
<span class="t f4" style="left:362.25px;top:694px;letter-spacing:-0.12px;">Both Budget a...</span>
<span class="t f4" style="left:500.5px;top:694px;letter-spacing:0.13px;">8/6/2024</span>
<span class="t f4" style="left:590.25px;top:694px;letter-spacing:-1.35px;">OPEN</span>
<span class="t f4" style="left:680.25px;top:694px;letter-spacing:-0.33px;">202408</span>
<span class="t f4" style="left:781.75px;top:694px;letter-spacing:-0.51px;">Resource</span>
<span class="t f4" style="left:871.75px;top:694px;letter-spacing:-0.48px;">HUGH HAIL</span>
<span class="t f4" style="left:973.85px;top:694px;letter-spacing:0.11px;">Hugh Hail</span>
<span class="t f4" style="left:1117.65px;top:694px;letter-spacing:-0.62px;">HOUR</span>
<span class="t f4" style="left:1239.42px;top:694px;letter-spacing:-0.52px;">0.25</span>
<span class="t f4" style="left:1332.81px;top:694px;letter-spacing:-0.41px;">500.00</span>
<span class="t f4" style="left:1440.81px;top:694px;letter-spacing:-0.41px;">500.00</span>
<span class="t f4" style="left:1548.61px;top:694px;letter-spacing:-0.41px;">125.00</span>
<span class="t f4" style="left:1656.61px;top:694px;letter-spacing:-0.41px;">125.00</span>
<span class="t f4" style="left:1753.95px;top:694px;letter-spacing:-0.45px;">1,000.00</span>
</div>
<div id="row16" role="row">
<span class="t f4" style="left:362.25px;top:722px;letter-spacing:-0.12px;">Both Budget a...</span>
<span class="t f4" style="left:500.5px;top:722px;letter-spacing:0.13px;">8/6/2024</span>
<span class="t f4" style="left:590.25px;top:722px;letter-spacing:-1.35px;">OPEN</span>
<span class="t f4" style="left:680.25px;top:722px;letter-spacing:-0.33px;">202408</span>
<span class="t f4" style="left:781.75px;top:722px;letter-spacing:-0.51px;">Resource</span>
<span class="t f4" style="left:871.75px;top:722px;letter-spacing:-0.48px;">HUGH HAIL</span>
<span class="t f4" style="left:973.85px;top:722px;letter-spacing:0.11px;">Hugh Hail</span>
<span class="t f4" style="left:1117.65px;top:722px;letter-spacing:-0.62px;">HOUR</span>
<span class="t f4" style="left:1239.42px;top:722px;letter-spacing:-0.52px;">0.25</span>
<span class="t f4" style="left:1332.81px;top:722px;letter-spacing:-0.41px;">500.00</span>
<span class="t f4" style="left:1440.81px;top:722px;letter-spacing:-0.41px;">500.00</span>
<span class="t f4" style="left:1548.61px;top:722px;letter-spacing:-0.41px;">125.00</span>
<span class="t f4" style="left:1656.61px;top:722px;letter-spacing:-0.41px;">125.00</span>
<span class="t f4" style="left:1753.95px;top:722px;letter-spacing:-0.45px;">1,000.00</span>
</div>
</div>
</div>
<div id="dlg" role="dialog" aria-modal="true" aria-label="Merged Project Journal Lines Posting">
<div style="position:absolute;left:473px;top:339px;width:880px;height:190px;background:#fff;box-shadow:0 0 33px rgba(0,0,0,.48);"></div>
<h2 style="margin:0;font:inherit;"><span class="t f13" style="left:497.65px;top:358px;letter-spacing:0.43px;">Merged</span> <span class="t f13" style="left:574.15px;top:358px;letter-spacing:-0.01px;">Project</span> <span class="t f13" style="left:643.35px;top:358px;letter-spacing:-0.05px;">Journal</span> <span class="t f13" style="left:714.65px;top:358px;letter-spacing:-0.74px;">Lines</span> <span class="t f13" style="left:766.05px;top:358px;letter-spacing:0.08px;">Posting</span></h2>
<svg style="position:absolute;left:1273px;top:362px;overflow:visible;" width="16" height="16" viewBox="0 0 16 16" aria-hidden="true"><path d="M1.300 14.700L14.800 1.300M10 1.300H14.800V6M1.300 10V14.700H6.200" fill="none" stroke="#5c5c5c" stroke-width="1.100"/></svg>
<svg style="position:absolute;left:1305px;top:362px;overflow:visible;" width="16" height="16" viewBox="0 0 16 16" aria-hidden="true"><path d="M.6 .8L15.400 15.200M15.400 .8L.6 15.200" fill="none" stroke="#484848" stroke-width="1.450"/></svg>
<span class="t f14" style="left:497.05px;top:420px;letter-spacing:-0.14px;">Posting Date</span>
<div style="position:absolute;left:585px;top:430px;width:258px;height:2px;background-image:linear-gradient(to right,#d0d1d5 2px,rgba(208,209,213,0) 2px);background-size:8px 2px;"></div>
<div style="position:absolute;left:851px;top:415px;width:476px;height:27px;border:1px solid #7f889b;background:#fff;"></div>
<span class="t f15" style="left:856.6px;top:420px;letter-spacing:-0.03px;">8/22/2024</span>
<svg style="position:absolute;left:1306px;top:422px;overflow:visible;" width="16" height="16" viewBox="0 0 16 16" aria-hidden="true"><g fill="none" stroke="#3a3a3a" stroke-width="1"><rect x=".7" y="2.700" width="14" height="12"/><path d="M3.500 .8v3M11.700 .8v3"/><path d="M.7 5.300h14" stroke="#8a8a8a"/></g><g fill="#6a6fb0"><rect x="3" y="8" width="1.300" height="1.300"/><rect x="5.7" y="5.500" width="1.300" height="3.800" opacity=".75"/><rect x="8.4" y="5.500" width="1.300" height="3.800" opacity=".75"/><rect x="11.1" y="5.500" width="1.300" height="3.800" opacity=".75"/><rect x="3" y="10" width="1.300" height="1.300"/><rect x="5.7" y="10" width="1.300" height="1.300"/><rect x="8.4" y="10" width="1.300" height="1.300"/><rect x="11.1" y="10" width="1.300" height="1.300"/><rect x="3" y="12" width="1.300" height="1.300"/><rect x="5.7" y="12" width="1.300" height="1.300"/><rect x="8.4" y="12" width="1.300" height="1.300"/></g></svg>
<div style="position:absolute;left:497px;top:453px;width:832px;height:1px;background:#c8c8c8;"></div>
<div style="position:absolute;left:1154px;top:473px;width:82px;height:30px;background:#008489;border:1px solid #007a7f;border-radius:2px;"></div>
<span class="t f16" style="left:1186.25px;top:479px;letter-spacing:-1.45px;">OK</span>
<div style="position:absolute;left:1245px;top:473px;width:82px;height:30px;background:#fff;border:1px solid #8a8a8a;border-radius:2px;"></div>
<span class="t f17" style="left:1266.25px;top:480px;letter-spacing:-0.05px;">Cancel</span>
</div>
</body></html>
